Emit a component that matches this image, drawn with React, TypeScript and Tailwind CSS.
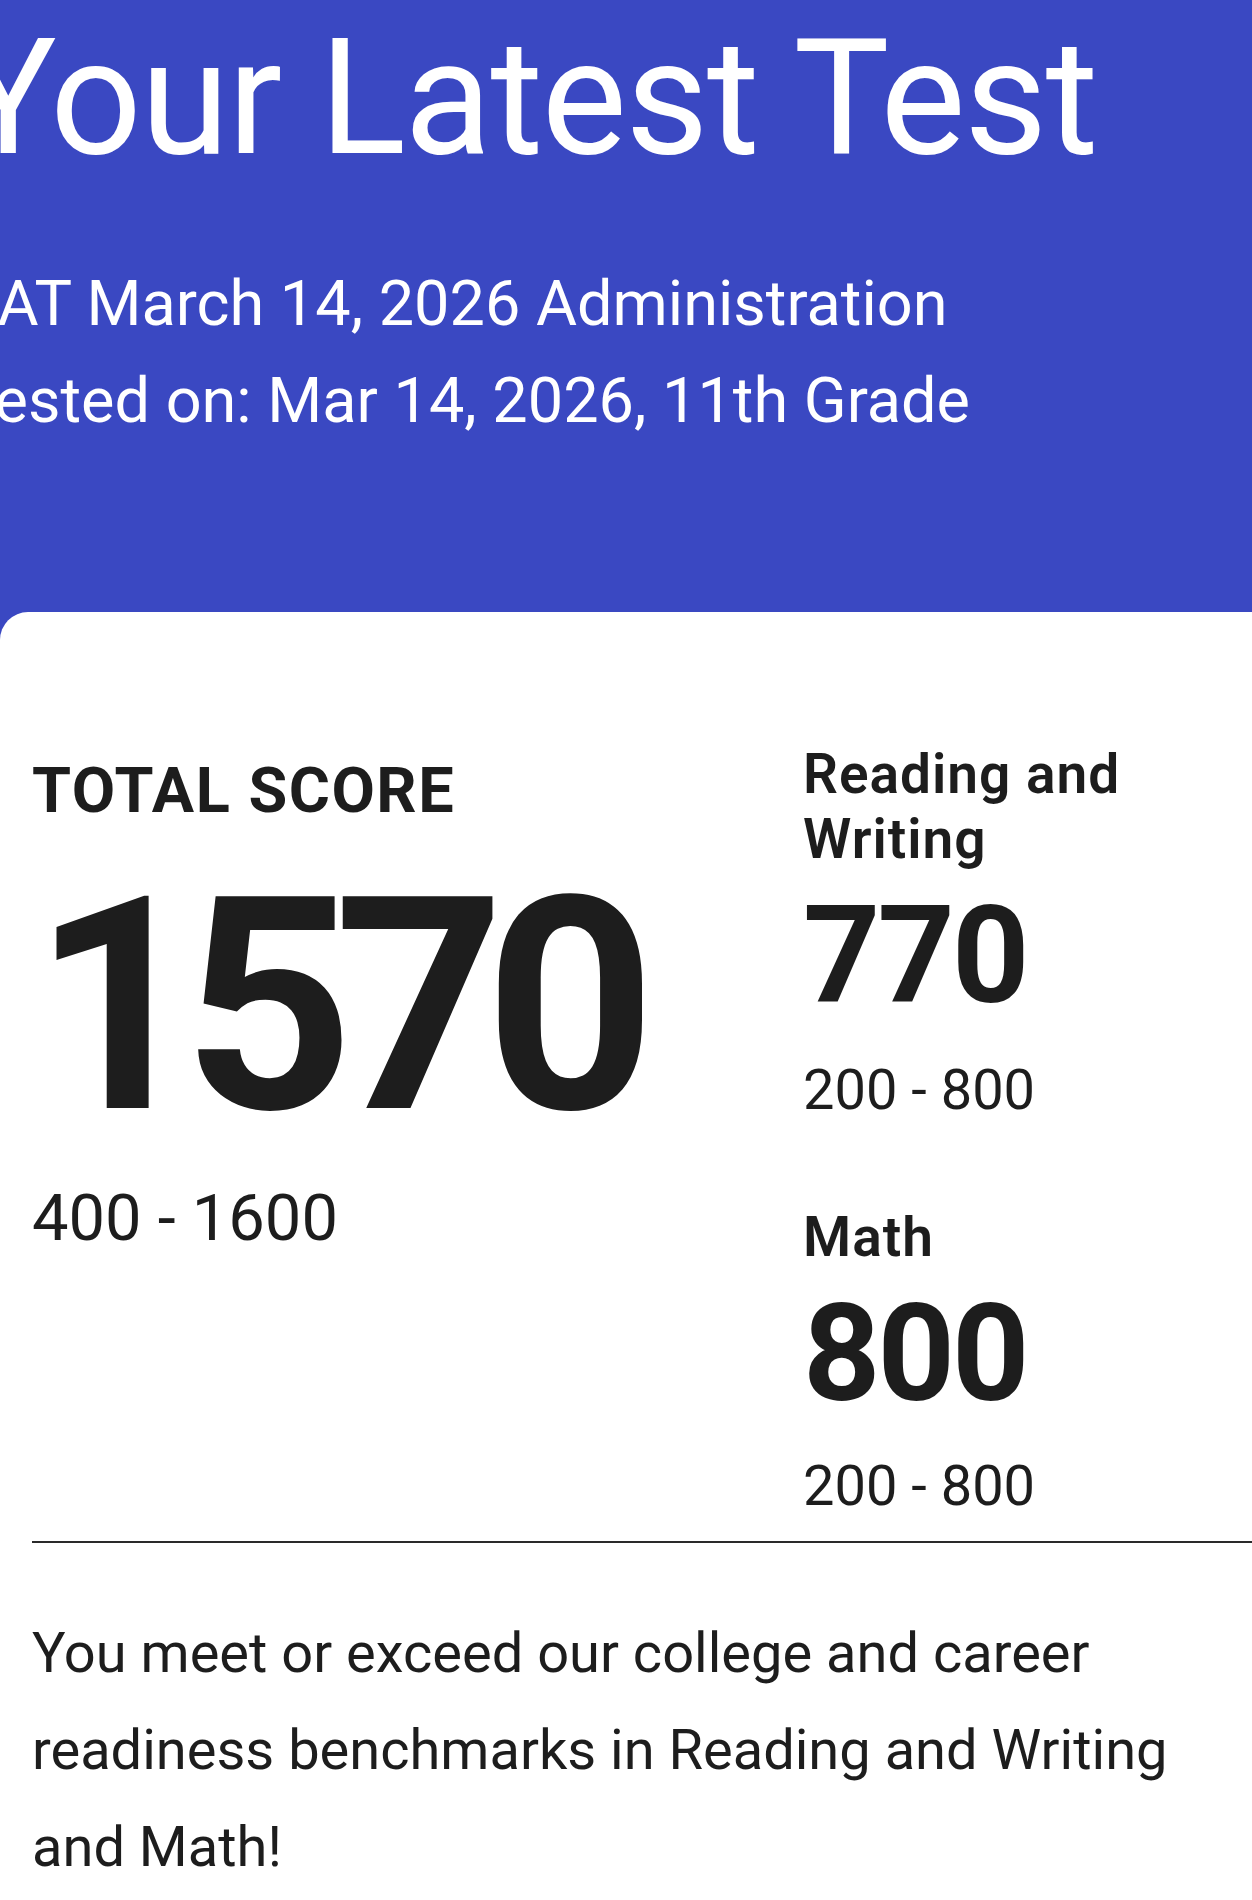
type Section = {
  name: string[]
  score: number
  range: string
}

const sections: Section[] = [
  { name: ['Reading and', 'Writing'], score: 770, range: '200 - 800' },
  { name: ['Math'], score: 800, range: '200 - 800' },
]

export default function App() {
  return (
    <div className="min-h-[1900px] overflow-x-hidden bg-[#3a48c2] font-[Roboto,sans-serif] text-[#1d1d1d]">
      {/* header */}
      <header className="pt-[18px] pb-[163px] text-white">
        <div className="-ml-[40px] whitespace-nowrap">
          <h1 className="text-[161px] leading-[161px] font-normal tracking-[-1.5px]">Your Latest Test</h1>
          <div className="mt-[76px] text-[63px] leading-[97px]">
            <p>SAT March 14, 2026 Administration</p>
            <p>Tested on: Mar 14, 2026, 11th Grade</p>
          </div>
        </div>
      </header>

      {/* score card */}
      <main className="-mr-10 rounded-tl-[28px] rounded-tr-[28px] bg-white pt-[130px] pb-[60px]">
        <div className="grid grid-cols-[771px_1fr] items-start pl-8">
          <div className="mt-[13px]">
            <h2 className="text-[63px] leading-[72px] font-bold tracking-[1.5px]">TOTAL SCORE</h2>
            <p className="mt-[31px] text-[298px] leading-[298px] font-bold tracking-[-20px]">1570</p>
            <p className="mt-[30px] text-[65px] leading-[64px]">400 - 1600</p>
          </div>

          <div>
            {sections.map((s, i) => (
              <SectionScore key={s.score + '-' + i} section={s} first={i === 0} />
            ))}
          </div>
        </div>

        <div className="mt-[27px] ml-8 border-t-2 border-[#2a2a2a]" />

        <p className="mt-[62px] pl-8 pr-[56px] text-[56px] leading-[97px]">
          You meet or exceed our college and career readiness benchmarks in Reading and Writing and Math!
        </p>
      </main>
    </div>
  )
}

function SectionScore({ section, first }: { section: Section; first: boolean }) {
  return (
    <div className={first ? '' : 'mt-[87px]'}>
      <h3 className="text-[55px] leading-[65px] font-semibold tracking-[1px]">
        {section.name.map((line) => (
          <span key={line} className="block">
            {line}
          </span>
        ))}
      </h3>
      <p className="mt-[17px] text-[135px] leading-[135px] font-bold tracking-[-3px]">{section.score}</p>
      <p className={`${first ? 'mt-[38px]' : 'mt-[36px]'} text-[56px] leading-[56px]`}>{section.range}</p>
    </div>
  )
}
